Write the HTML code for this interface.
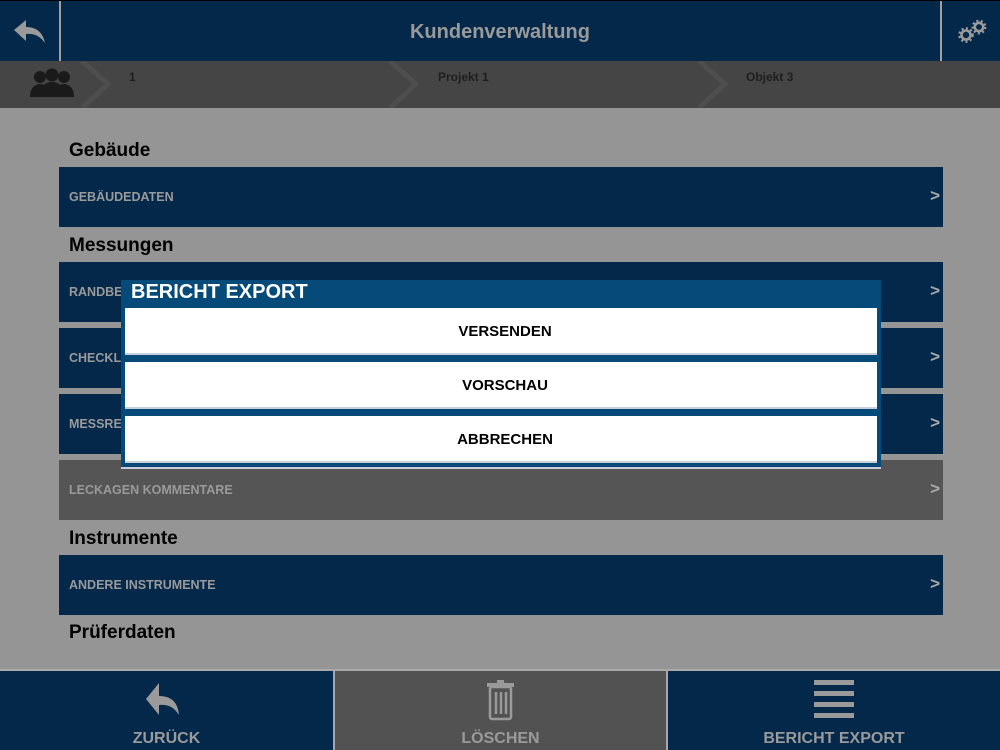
<!DOCTYPE html>
<html><head><meta charset="utf-8"><style>
*{margin:0;padding:0;box-sizing:border-box}
body{width:1000px;height:750px;background:#959595;font-family:"Liberation Sans",sans-serif;position:relative;overflow:hidden}
.abs{position:absolute}
.hdr{left:0;top:0;width:1000px;height:61px;background:#03284a;border-top:1px solid #000}
.title{left:0;width:1000px;top:21px;text-align:center;color:#9a9a9a;font-weight:bold;font-size:20px}
.sep{width:2px;background:#a0a0a0;top:1px;height:60px}
.bc{left:0;top:61px;width:1000px;height:47px;background:#454545}
.bct{color:#1e1e1e;font-weight:bold;font-size:12px;top:70px}
.lbl{left:69px;font-weight:bold;font-size:19px;color:#000}
.row{left:59px;width:884px;height:60px;background:#03284a;color:#9a9a9a;font-weight:bold;font-size:12.5px;padding:23px 0 0 10px}
.row .ar{position:absolute;right:3px;top:19px;font-size:17px;font-weight:bold;color:#aaa}
.dlg{left:121px;top:280px;width:760px;height:189px;background:#054a78;border-bottom:2px solid #ccd}
.dlg h2{color:#fff;font-size:20px;padding:1px 0 0 10px;height:28px}
.btn{position:absolute;left:4px;width:752px;height:47px;background:#fff;border-bottom:2px solid #c8d0dc;text-align:center;font-weight:bold;font-size:15px;line-height:47px;color:#000;padding-left:8px}
.bot{top:669px;height:81px;border-top:2px solid #a8a8a8}
.bl{color:#9a9a9a;font-weight:bold;font-size:16px;position:absolute;width:100%;text-align:center;top:59px}
</style></head><body>
<div class="abs hdr"></div>
<svg class="abs" style="left:12px;top:18px" width="36" height="26" viewBox="0 0 36 26"><path d="M14 2 L2 12 L14 23 L14 16 C22 15 28 18 33 25 C31 15 25 9 14 9 Z" fill="#9a9a9a"/></svg>
<div class="abs sep" style="left:59px"></div>
<div class="abs sep" style="left:940px"></div>
<div class="abs title">Kundenverwaltung</div>
<svg class="abs" style="left:956px;top:18px" width="34" height="28" viewBox="0 0 34 28"><g fill="none" stroke="#9a9a9a" stroke-width="2.6"><circle cx="10" cy="17" r="4.5"/><circle cx="23" cy="9" r="4.2"/></g><g stroke="#9a9a9a" stroke-width="2.5" fill="none" stroke-dasharray="2 2.4"><circle cx="10" cy="17" r="6.6"/><circle cx="23" cy="9" r="6.2"/></g></svg>
<div class="abs bc"></div>
<svg class="abs" style="left:0;top:61px" width="1000" height="47"><g fill="none" stroke="#4e4e4e" stroke-width="5"><path d="M82 0 L108 23 L82 47"/><path d="M390 0 L416 23 L390 47"/><path d="M699 0 L725 23 L699 47"/></g>
<g fill="#1a1a1a"><circle cx="40" cy="16" r="6"/><circle cx="52" cy="14" r="6.5"/><circle cx="64" cy="16" r="6"/><path d="M30 36 C30 26 36 23 40 23 C44 23 50 26 50 36 Z"/><path d="M54 36 C54 26 60 23 64 23 C68 23 74 26 74 36 Z"/><path d="M40 36 C40 24 46 21 52 21 C58 21 64 24 64 36 Z"/></g></svg>
<div class="abs bct" style="left:129px">1</div>
<div class="abs bct" style="left:438px">Projekt 1</div>
<div class="abs bct" style="left:746px">Objekt 3</div>

<div class="abs lbl" style="top:140px">Gebäude</div>
<div class="abs row" style="top:167px">GEBÄUDEDATEN<span class="ar">&gt;</span></div>
<div class="abs lbl" style="top:235px">Messungen</div>
<div class="abs row" style="top:262px">RANDBEDINGUNGEN<span class="ar">&gt;</span></div>
<div class="abs row" style="top:328px">CHECKLISTE<span class="ar">&gt;</span></div>
<div class="abs row" style="top:394px">MESSREIHEN<span class="ar">&gt;</span></div>
<div class="abs row" style="top:460px;background:#555">LECKAGEN KOMMENTARE<span class="ar">&gt;</span></div>
<div class="abs lbl" style="top:528px">Instrumente</div>
<div class="abs row" style="top:555px">ANDERE INSTRUMENTE<span class="ar">&gt;</span></div>
<div class="abs lbl" style="top:622px">Prüferdaten</div>

<div class="abs dlg"><h2>BERICHT EXPORT</h2>
<div class="btn" style="top:28px">VERSENDEN</div>
<div class="btn" style="top:82px">VORSCHAU</div>
<div class="btn" style="top:136px">ABBRECHEN</div>
</div>

<div class="abs bot" style="left:0;width:333px;background:#03284a"><svg class="abs" style="left:146px;top:12px" width="40" height="36" viewBox="0 0 40 36"><path d="M13 0 L0 16 L13 32 L13 22 C22 21 28 24 33 32 C32 20 26 13 13 13 Z" fill="#9a9a9a"/></svg><div class="bl">ZURÜCK</div></div>
<div class="abs bot" style="left:333px;width:335px;background:#525252;border-left:2px solid #a8a8a8;border-right:2px solid #a8a8a8"><svg class="abs" style="left:151px;top:8px" width="30" height="42" viewBox="0 0 30 42"><g fill="none" stroke="#9a9a9a" stroke-width="2.5"><rect x="4" y="8" width="21" height="32" rx="2"/><path d="M10 13v22M15 13v22M20 13v22"/></g><rect x="1" y="4" width="27" height="4" fill="#9a9a9a"/><rect x="11" y="1" width="7" height="4" fill="#9a9a9a"/></svg><div class="bl">LÖSCHEN</div></div>
<div class="abs bot" style="left:668px;width:332px;background:#03284a"><svg class="abs" style="left:146px;top:9px" width="40" height="40"><g fill="#9a9a9a"><rect y="0" width="40" height="5"/><rect y="11" width="40" height="5"/><rect y="22" width="40" height="5"/><rect y="33" width="40" height="5"/></g></svg><div class="bl">BERICHT EXPORT</div></div>
</body></html>
